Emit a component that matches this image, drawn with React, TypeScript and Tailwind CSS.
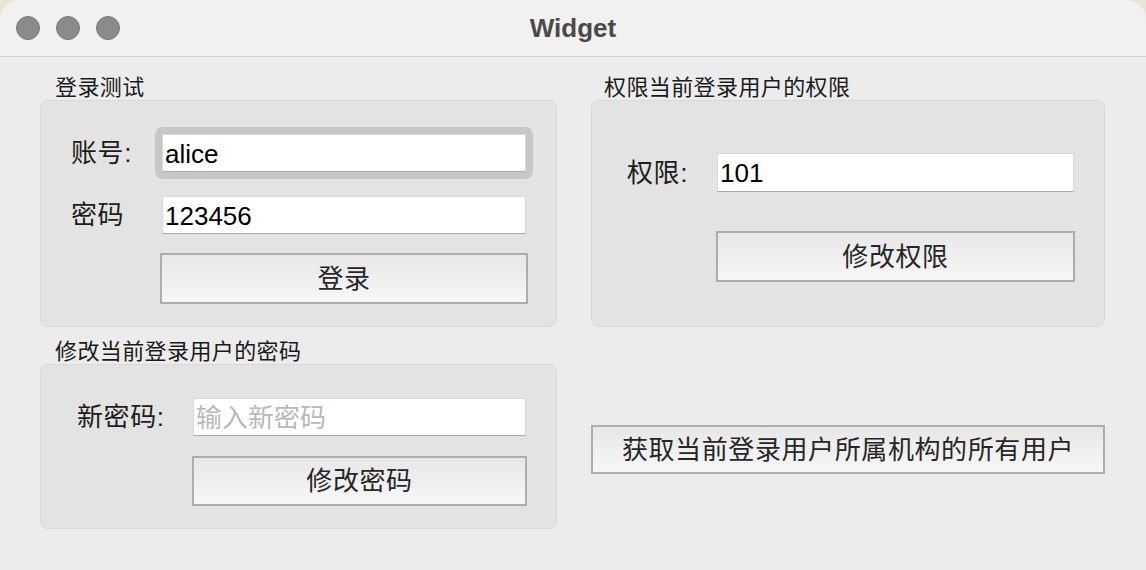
import type { ReactNode } from 'react';

const font = "font-['Liberation_Sans','Noto_Sans_CJK_SC',sans-serif]";

const Field = ({ value, placeholder, className = '' }: { value?: string; placeholder?: string; className?: string }) => (
  <input
    readOnly
    value={value}
    placeholder={placeholder}
    className={`block h-[38px] w-full border border-[#d8d8d8] border-b-[#a9a9a9] bg-white px-[2px] pt-[2px] text-[26px] text-black outline-none placeholder:text-[#b9b9b9] ${font} ${className}`}
  />
);

const PushButton = ({ children, className = '' }: { children: ReactNode; className?: string }) => (
  <button
    type="button"
    className={`flex items-center justify-center border-2 border-[#adadad] bg-linear-to-b from-[#e7e7e7] to-[#f7f7f7] text-[26px] leading-none tracking-[0.6px] text-[#262626] ${className}`}>
    {children}
  </button>
);

const GroupTitle = ({ children, className = '' }: { children: ReactNode; className?: string }) => (
  <div className={`h-[25px] text-[22px] leading-[25px] tracking-[0.4px] text-[#1a1a1a] ${className}`}>{children}</div>
);

const GroupBox = ({ children, className = '' }: { children: ReactNode; className?: string }) => (
  <div className={`rounded-[8px] border border-[#d9d9d9] bg-[#e3e3e3] ${className}`}>{children}</div>
);

export default function App() {
  return (
    <div className={`h-[570px] w-[1146px] bg-[#e9e4d3] ${font}`}>
      <div className="flex h-full flex-col overflow-hidden rounded-t-[20px] bg-[#ececec]">
        {/* title bar */}
        <header className="grid h-[57px] shrink-0 grid-cols-[1fr_auto_1fr] items-center border-b border-[#d2d2d2] bg-[#f2f1f0]">
          <div className="flex items-center gap-x-[16px] pl-[16px]">
            <span className="size-[24px] rounded-full border border-[#7b7b7b] bg-[#8b8b8b]" />
            <span className="size-[24px] rounded-full border border-[#7b7b7b] bg-[#8b8b8b]" />
            <span className="size-[24px] rounded-full border border-[#7b7b7b] bg-[#8b8b8b]" />
          </div>
          <h1 className="text-[26px] font-bold leading-none text-[#4a4a4a]">Widget</h1>
          <div />
        </header>

        <main className="flex gap-x-[34px] pl-[40px] pt-[18px] text-[26px] text-[#1c1c1c]">
          {/* left column */}
          <div className="flex w-[517px] flex-col">
            <GroupTitle className="pl-[15px]">登录测试</GroupTitle>
            <GroupBox className="h-[227px] pl-[30px] pt-[33px]">
              <div className="grid grid-cols-[91px_364px] items-center gap-y-[24px]">
                <span className="leading-none tracking-[0.6px]">账号:</span>
                <div className="-m-[7px] rounded-[8px] bg-[#c7c7c7] p-[7px]">
                  <Field value="alice" className="border-[#bdbdbd]" />
                </div>
                <span className="leading-none tracking-[0.6px]">密码</span>
                <Field value="123456" />
              </div>
              <PushButton className="ml-[89px] mt-[19px] h-[51px] w-[368px]">登录</PushButton>
            </GroupBox>

            <GroupTitle className="mt-[12px] pl-[15px]">修改当前登录用户的密码</GroupTitle>
            <GroupBox className="h-[165px] pl-[36px] pt-[33px]">
              <div className="grid grid-cols-[116px_333px] items-center">
                <span className="leading-none tracking-[0.6px]">新密码:</span>
                <Field placeholder="输入新密码" />
              </div>
              <PushButton className="ml-[115px] mt-[20px] h-[50px] w-[335px]">修改密码</PushButton>
            </GroupBox>
          </div>

          {/* right column */}
          <div className="flex w-[514px] flex-col">
            <GroupTitle className="pl-[13px]">权限当前登录用户的权限</GroupTitle>
            <GroupBox className="h-[227px] pl-[35px] pt-[52px]">
              <div className="grid grid-cols-[90px_357px] items-center">
                <span className="leading-none tracking-[0.6px]">权限:</span>
                <Field value="101" className="h-[39px]" />
              </div>
              <PushButton className="ml-[89px] mt-[39px] h-[51px] w-[359px]">修改权限</PushButton>
            </GroupBox>

            <PushButton className="mt-[98px] h-[49px] w-full">获取当前登录用户所属机构的所有用户</PushButton>
          </div>
        </main>
      </div>
    </div>
  );
}
